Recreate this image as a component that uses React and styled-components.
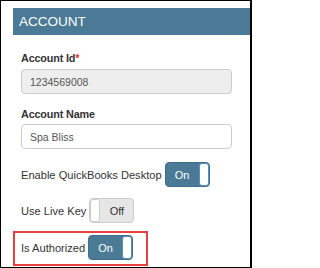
import React from "react";
import styled, { createGlobalStyle } from "styled-components";

const Global = createGlobalStyle`
  html, body { margin: 0; padding: 0; background: #fff; }
  body { font-family: "Liberation Sans", Arial, sans-serif; }
`;

const Frame = styled.div`
  width: 252px;
  height: 268px;
  box-sizing: border-box;
  border: 1px solid #000;
  border-right-width: 2px;
  padding: 7px 0 0 12px;
  overflow: hidden;
  background: #fff;
`;

const Header = styled.div`
  height: 27px;
  margin-right: -20px;
  background: #4a7a95;
  color: #fff;
  font-size: 13.5px;
  line-height: 27px;
  padding-left: 6px;
`;

const Body = styled.div`
  padding: 16px 0 0 8px;
  display: flex;
  flex-direction: column;
  align-items: flex-start;
`;

const Field = styled.div`
  display: flex;
  flex-direction: column;
  margin-bottom: ${(p) => p.$mb}px;
`;

const Label = styled.div`
  font-size: 10.8px;
  font-weight: bold;
  letter-spacing: -0.15px;
  line-height: 14px;
  color: #333;
  margin-bottom: ${(p) => p.$mb}px;
`;

const Req = styled.span`
  color: #e02b2b;
`;

const InputBox = styled.div`
  width: 211px;
  height: 25px;
  box-sizing: border-box;
  display: flex;
  align-items: center;
  border: 1px solid #ccc;
  border-radius: 4px;
  padding: 0 0 0 8px;
  font-size: 10.5px;
  color: #555;
  background: ${(p) => (p.$disabled ? "#eee" : "#fff")};
`;

const Row = styled.div`
  display: flex;
  align-items: center;
  gap: 3px;
  margin-bottom: ${(p) => p.$mb || 0}px;
`;

const Highlight = styled(Row)`
  margin-left: -8px;
  padding: 2px 13px 4px 6px;
  border: 2px solid #e8403f;
`;

const RowText = styled.span`
  font-size: 11.1px;
  color: #333;
  line-height: 14px;
`;

const Switch = styled.div`
  display: inline-flex;
  flex-direction: ${(p) => (p.$on ? "row" : "row-reverse")};
  width: 45px;
  height: 25px;
  box-sizing: border-box;
  border: 1px solid ${(p) => (p.$on ? "#3f6e8b" : "#ccc")};
  border-radius: 4px;
  overflow: hidden;
  background: ${(p) => (p.$on ? "#4a7a95" : "#e6e6e6")};
`;

const SwitchText = styled.span`
  flex: 1;
  display: flex;
  align-items: center;
  justify-content: center;
  font-size: 11px;
  color: ${(p) => (p.$on ? "#fff" : "#333")};
`;

const Handle = styled.span`
  width: 10px;
  box-sizing: border-box;
  background: #fff;
  border: 1px solid ${(p) => (p.$on ? "#5b8fc4" : "#ccc")};
  border-radius: 3px;
`;

function Toggle({ on }) {
  return (
    <Switch $on={on}>
      <SwitchText $on={on}>{on ? "On" : "Off"}</SwitchText>
      <Handle $on={on} />
    </Switch>
  );
}

export default function App() {
  return (
    <>
      <Global />
      <Frame>
        <Header>ACCOUNT</Header>
        <Body>
          <Field $mb={13}>
            <Label $mb={4}>
              Account Id<Req>*</Req>
            </Label>
            <InputBox $disabled>1234569008</InputBox>
          </Field>
          <Field $mb={13}>
            <Label $mb={3}>Account Name</Label>
            <InputBox>Spa Bliss</InputBox>
          </Field>
          <Row $mb={11}>
            <RowText>Enable QuickBooks Desktop</RowText>
            <Toggle on />
          </Row>
          <Row $mb={8}>
            <RowText>Use Live Key</RowText>
            <Toggle on={false} />
          </Row>
          <Highlight>
            <RowText>Is Authorized</RowText>
            <Toggle on />
          </Highlight>
        </Body>
      </Frame>
    </>
  );
}
